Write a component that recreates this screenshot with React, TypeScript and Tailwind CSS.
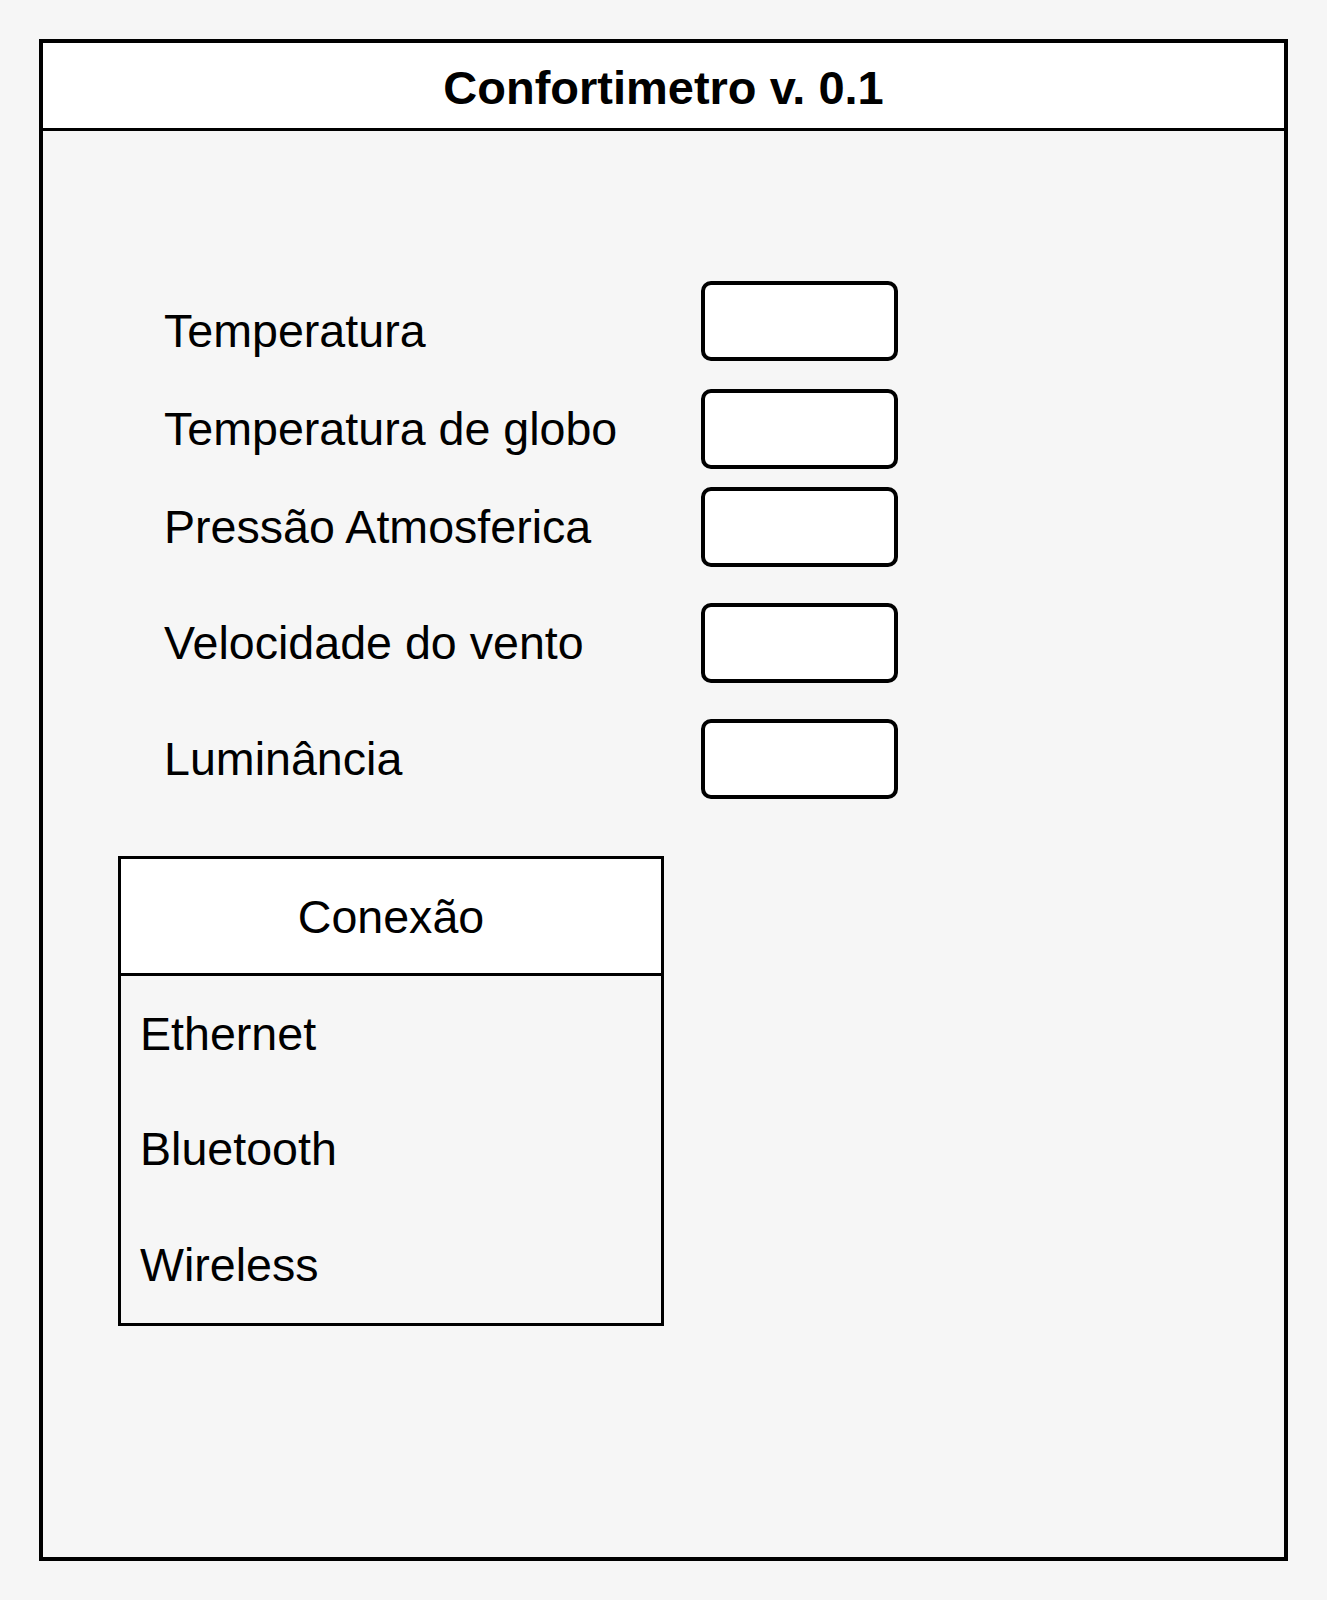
const FIELDS = [
  { label: 'Temperatura', row: 'mt-[150px]', text: 'pt-[20px]' },
  { label: 'Temperatura de globo', row: 'mt-[28px]', text: '' },
  { label: 'Pressão Atmosferica', row: 'mt-[18px]', text: '' },
  { label: 'Velocidade do vento', row: 'mt-[36px]', text: '' },
  { label: 'Luminância', row: 'mt-[36px]', text: '' },
]

const CONNECTIONS = ['Ethernet', 'Bluetooth', 'Wireless']

export default function App() {
  return (
    <div
      className="min-h-[1600px] bg-[#f6f6f6] pt-[39px] pl-[39px] text-black"
      style={{ fontFamily: '"Liberation Sans", Arial, sans-serif' }}
    >
      <div className="w-[1249px] h-[1522px] border-4 border-black flex flex-col">
        {/* header */}
        <div className="h-[88px] bg-white border-b-[3px] border-black flex items-center justify-center pt-[4px]">
          <h1 className="text-[47px] font-bold leading-none">Confortimetro v. 0.1</h1>
        </div>

        {/* campos */}
        <div className="flex flex-col pl-[121px]">
          {FIELDS.map((f) => (
            <div key={f.label} className={`flex items-center ${f.row}`}>
              <div className={`w-[537px] text-[46.6px] leading-none ${f.text}`}>{f.label}</div>
              <div className="w-[197px] h-[80px] bg-white border-4 border-black rounded-[10px]" />
            </div>
          ))}
        </div>

        {/* conexão */}
        <div className="ml-[75px] mt-[57px] w-[546px] h-[470px] border-[3px] border-black flex flex-col">
          <div className="h-[117px] bg-white border-b-[3px] border-black flex items-center justify-center pt-[2px]">
            <span className="text-[46.6px] leading-none">Conexão</span>
          </div>
          <div className="flex-1 flex flex-col">
            {CONNECTIONS.map((c) => (
              <div key={c} className="flex-1 flex items-center pl-[19px]">
                <span className="text-[46.6px] leading-none">{c}</span>
              </div>
            ))}
          </div>
        </div>
      </div>
    </div>
  )
}
